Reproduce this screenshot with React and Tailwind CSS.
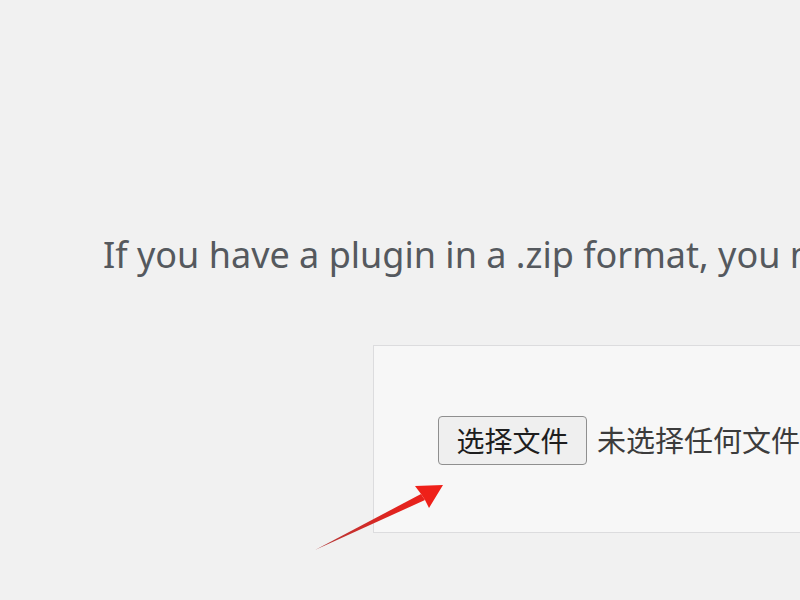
import React from "react";

const Arrow = () => (
  <svg
    className="absolute left-0 top-0 pointer-events-none"
    width="800"
    height="600"
    viewBox="0 0 800 600"
  >
    <defs>
      <linearGradient id="arrowFill" x1="315" y1="550" x2="443" y2="485" gradientUnits="userSpaceOnUse">
        <stop offset="0" stopColor="#b23a3a" />
        <stop offset="0.6" stopColor="#e0241f" />
        <stop offset="1" stopColor="#f0201a" />
      </linearGradient>
    </defs>
    {/* shaft tapering from tail to head */}
    <path d="M315 550 L421 494 L425 500 Z" fill="url(#arrowFill)" />
    {/* head */}
    <path d="M443 485 L415 486 L421 494 L425 500 L429 508 Z" fill="#ef2019" />
  </svg>
);

export default function App() {
  return (
    <div
      className="relative w-[800px] h-[600px] overflow-hidden bg-[#f1f1f1]"
      style={{ fontFamily: '"Noto Sans", "Noto Sans CJK SC", sans-serif' }}
    >
      <p className="pt-[233px] pl-[103px] whitespace-nowrap text-[36px] leading-[44px] text-[#55595e]">
        If you have a plugin in a .zip format, you may install or update it by uploading it here.
      </p>

      <div className="mt-[68px] ml-[373px] w-[600px] h-[188px] border border-[#dcdcde] bg-[#f7f7f7] pt-[70px] pl-[64px]">
        <div className="flex items-center gap-[10px] whitespace-nowrap">
          <button className="w-[149px] h-[49px] rounded-[4px] border border-[#8f8f8f] bg-[#efefef] text-[28px] text-[#1e1e1e] leading-none">
            选择文件
          </button>
          <span className="text-[29px] text-[#3c3c3c] leading-none">未选择任何文件</span>
        </div>
      </div>

      <Arrow />
    </div>
  );
}
